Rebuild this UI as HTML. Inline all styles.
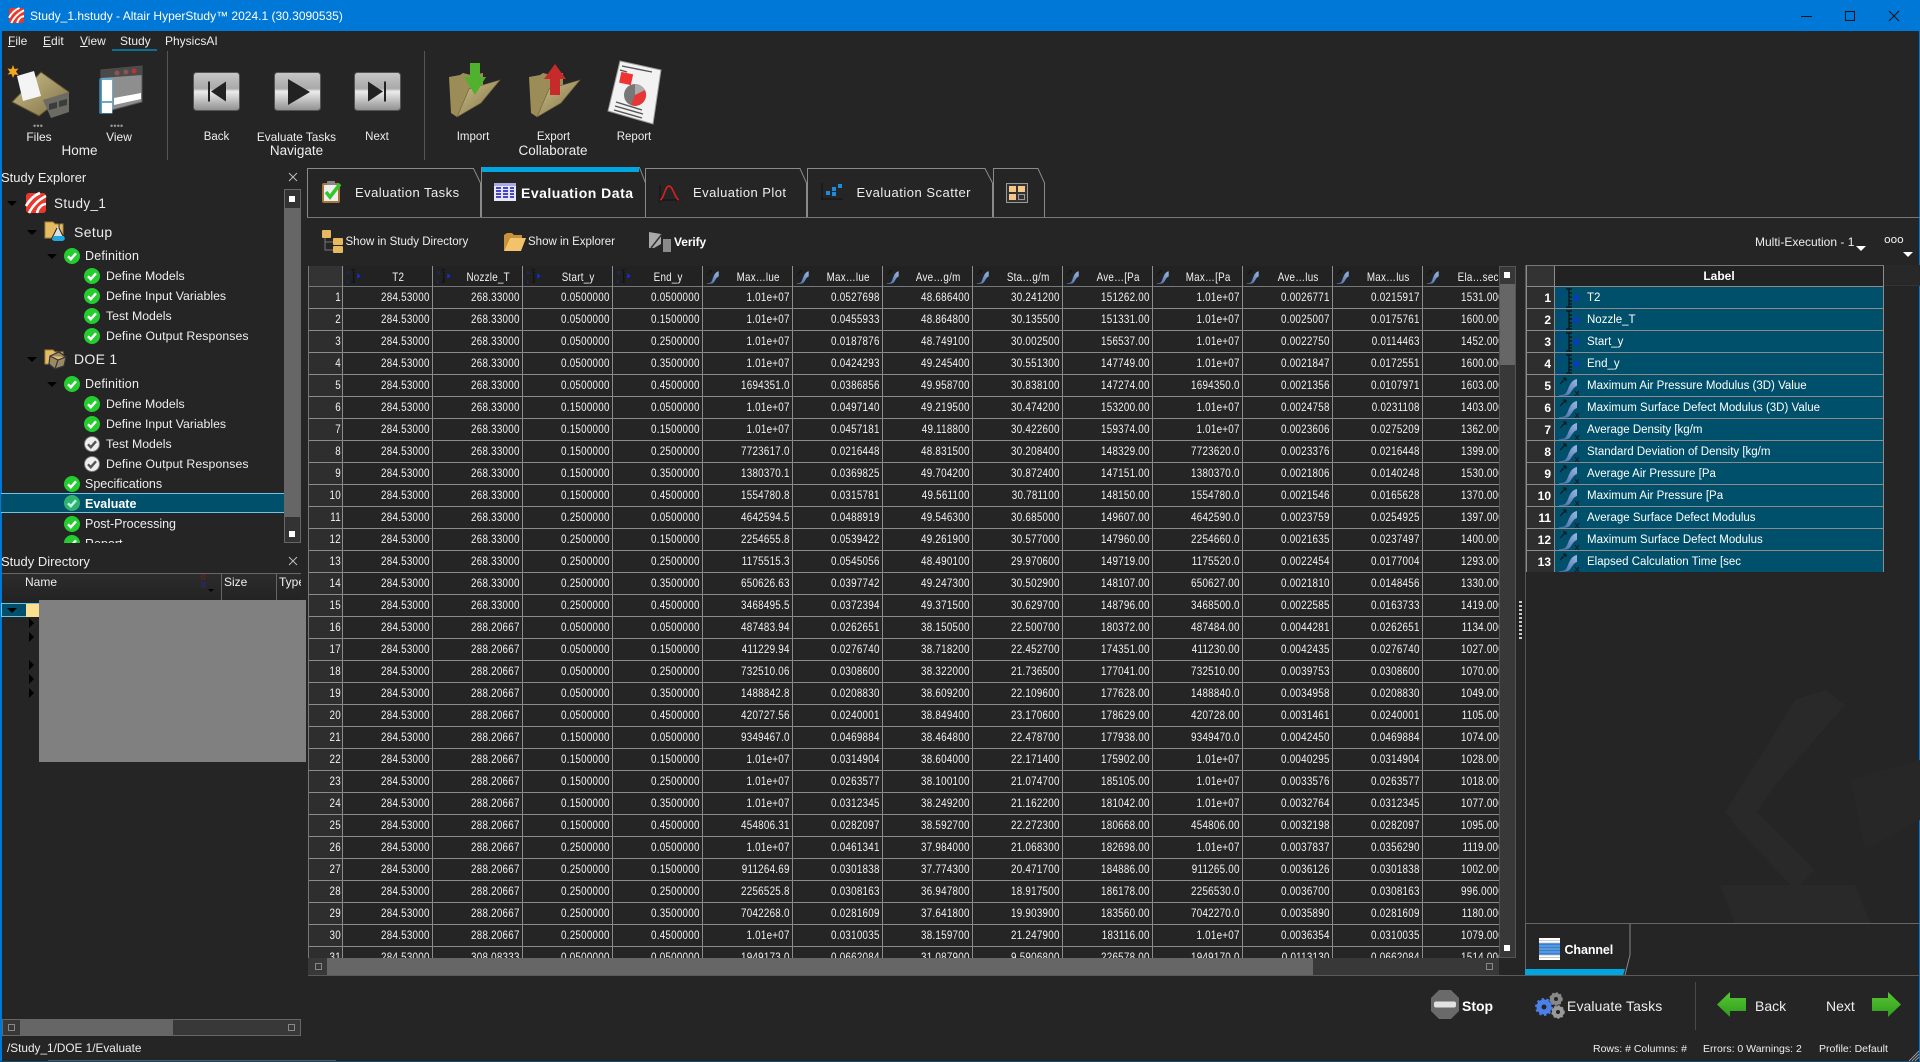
<!DOCTYPE html>
<html lang="en"><head><meta charset="utf-8"><title>Study_1.hstudy - Altair HyperStudy</title>
<style>
*{box-sizing:border-box}
html,body{margin:0;padding:0;width:1920px;height:1062px;overflow:hidden;background:#252525}
body{position:relative;font-family:"Liberation Sans",sans-serif;color:#eee}
.a{position:absolute}
.t{position:absolute;white-space:nowrap;font-size:12px;line-height:14px;color:#eee}
.c{transform:translateX(-50%)}
.tr{position:absolute;width:0;height:0;border-left:5px solid transparent;border-right:5px solid transparent;border-top:5px solid #000}
.rt{position:absolute;width:0;height:0;border-top:5px solid transparent;border-bottom:5px solid transparent;border-left:5px solid #000}
.sq{position:absolute;width:6px;height:6px;background:#fff}
.sqo{position:absolute;width:7px;height:7px;border:1px solid #888}
svg{position:absolute;overflow:visible}
table{border-collapse:separate;border-spacing:0;table-layout:fixed;position:absolute;left:0;top:0}
#g{width:1472px;font:12px/14px "Liberation Sans",sans-serif;letter-spacing:.3px;color:#f2f2f2;transform:scaleX(.81818);transform-origin:0 0}
#g col.h{width:42px}#g col.d{width:110px}
#g td,#g th{height:22px;padding:0 4.500px 2px 0;text-align:right;border-bottom:1px solid #8c8c8c;overflow:hidden;white-space:nowrap;font-weight:normal;background:#252525}
#g thead th{height:21px;text-align:center;padding:2px 0 0 24px;background:#222;position:relative;border-color:#777}
#g tbody th{background:#2e2e2e;padding-right:3px}
#g thead th svg{left:4px;top:3px}
#vl{position:absolute;left:33px;top:0;width:1200px;height:692px;background:repeating-linear-gradient(90deg,#8c8c8c 0 1px,transparent 1px 90px)}
#l{width:357px;font-size:11.500px;color:#fff}
#l col.h{width:28px}
#l td,#l th{height:22px;border-right:1px solid #8c8c8c;border-bottom:1px solid #8c8c8c;padding:0;white-space:nowrap;position:relative}
#l td{background:#00506b;padding-left:32px;line-height:20px}
#l tbody th{background:#2e2e2e;text-align:right;padding-right:3px;font-size:12px}
#l thead th{height:21px;background:#222;font-size:12px}
#l td svg{left:4px;top:1px}
.tab{stroke:#8a8a8a;fill:#252525;stroke-width:1}
</style></head><body>
<svg width="0" height="0" style="position:absolute">
<defs>
<linearGradient id="btn" x1="0" y1="0" x2="0" y2="1"><stop offset="0" stop-color="#c8c8c8"/><stop offset=".42" stop-color="#a9a9a9"/><stop offset=".5" stop-color="#ececec"/><stop offset="1" stop-color="#8f8f8f"/></linearGradient>
<linearGradient id="fold" x1="0" y1="0" x2="1" y2="1"><stop offset="0" stop-color="#cfc08e"/><stop offset="1" stop-color="#7e6f42"/></linearGradient>
<linearGradient id="stair" x1="0" y1="1" x2="1" y2="0"><stop offset="0" stop-color="#41649f"/><stop offset="1" stop-color="#9ab8e4"/></linearGradient>
<linearGradient id="gg" x1="0" y1="0" x2="0" y2="1"><stop offset="0" stop-color="#58c832"/><stop offset="1" stop-color="#2f9a1e"/></linearGradient>
<symbol id="ok" viewBox="0 0 16 16"><circle cx="8" cy="8" r="8" fill="#24cc30"/><path d="M4 8.300l2.800 2.900L12 5.300" fill="none" stroke="#fff" stroke-width="2.400"/></symbol>
<symbol id="okw" viewBox="0 0 16 16"><circle cx="8" cy="8" r="7.500" fill="#eee" stroke="#777"/><path d="M4 8.300l2.800 2.900L12 5.300" fill="none" stroke="#555" stroke-width="2.400"/></symbol>
<symbol id="var" viewBox="0 0 22 20" preserveAspectRatio="none"><text x="0" y="7" font-size="7" fill="#1030d0" font-family="Liberation Sans">U</text><text x="0" y="20" font-size="7" fill="#1030d0" font-family="Liberation Sans">L</text><path d="M7 1h6M10 1v18M7 19h6M10 5h3M10 9h3M10 13h3M10 16h3" stroke="#111" stroke-width="1.200" fill="none"/><path d="M21 10l-5-4v8z" fill="#1030e0"/></symbol>
<symbol id="rsp" viewBox="0 0 22 20" preserveAspectRatio="none"><path d="M0 19c6 0 7-1 9-6s4-9 9-10v7c-3 1-4 3-6 6s-3 4-12 4z" fill="url(#stair)"/><path d="M1 8l6-6M7 2H4M7 2v3" stroke="#111" stroke-width="1" fill="none"/><path d="M16 15l4 5M20 15l-4 5" stroke="#123" stroke-width="1.200"/></symbol>
</defs></svg>

<!-- title bar -->
<div class="a" style="left:0;top:0;width:1920px;height:31px;background:#0078d7"></div>
<div class="a" style="left:0;top:0;width:1.500px;height:1062px;background:#0078d7"></div>
<div class="a" style="left:1919px;top:0;width:1px;height:1062px;background:#0078d7"></div>
<div class="a" style="left:0;top:1061px;width:1920px;height:1px;background:#134b6e"></div>
<div class="a" style="left:48px;top:1060px;width:288px;height:1px;background:#555"></div>
<svg style="left:9px;top:8px" width="15" height="15" viewBox="0 0 20 20"><rect width="20" height="20" rx="3" fill="#e8392c"/><path d="M0 13C4 6 9 2 14 0M3 20C7 12 12 7 20 3M11 20c1-5 5-9 9-9" stroke="#fff" stroke-width="2.600" fill="none"/></svg>
<div class="t" style="left:30px;top:9px;color:#fff;font-size:12px">Study_1.hstudy - Altair HyperStudy™ 2024.1 (30.3090535)</div>
<svg style="left:1800px;top:10px" width="110" height="12" fill="none" stroke="#111"><path d="M1 6.500h11"/><rect x="45.500" y="1.500" width="9" height="9"/><path d="M89 1l10 10M99 1l-10 10"/></svg>

<!-- menu -->
<div class="t" style="left:8px;top:34px"><u>F</u>ile</div>
<div class="t" style="left:43px;top:34px"><u>E</u>dit</div>
<div class="t" style="left:80px;top:34px"><u>V</u>iew</div>
<div class="t" style="left:120px;top:34px">Study</div>
<div class="t" style="left:165px;top:34px">PhysicsAI</div>
<div class="a" style="left:112px;top:49px;width:45px;height:2px;background:#0a6f92"></div>
<div class="a" style="left:167px;top:51px;width:1px;height:109px;background:#555"></div>
<div class="a" style="left:424px;top:51px;width:1px;height:109px;background:#555"></div>

<!-- ribbon icons -->
<svg style="left:7px;top:64px" width="64" height="54" viewBox="0 0 64 54">
<path d="M5 38L34 8l28 20-30 24z" fill="url(#fold)" stroke="#5b4f2c"/>
<path d="M36 36l26-8v20l-18 6z" fill="#6c6b63"/><path d="M42 40l8-2v6l-8 2zM52 37l8-2v6l-8 2z" fill="#3c3c3a"/>
<path d="M10 12l17-5 7 25-18 5z" fill="#f4f4f4"/>
<path d="M6 1l1.500 4 4-.5-2.500 3 2.500 3.500-4-.5L6 14l-1.500-4-4 .5L3 8 .5 4.500l4 .5z" fill="#f3a71c"/></svg>
<svg style="left:96px;top:64px" width="48" height="54" viewBox="0 0 48 54">
<path d="M5 6l41-4v36L5 49z" fill="#8e8e8e" stroke="#555"/><path d="M5 6l41-4v9L5 14z" fill="#4a4a4a"/>
<circle cx="21" cy="9" r="2.500" fill="#8a5555"/><circle cx="30" cy="8" r="2.500" fill="#8a5555"/><circle cx="38" cy="7" r="2.500" fill="#b33"/>
<rect x="3" y="14" width="14" height="36" rx="2" fill="#49c6ff" opacity=".5"/><rect x="6" y="16" width="10" height="21" fill="#fff"/><rect x="6" y="39" width="10" height="10" fill="#fff"/><path d="M18 34l27-5v6l-27 6z" fill="#fff"/></svg>
<svg style="left:193px;top:72px" width="47" height="39"><rect x=".5" y=".5" width="46" height="38" rx="3" fill="url(#btn)" stroke="#555"/><path d="M15 9.500h2v20h-2zM33 9.500v20L18 19.500z" fill="#222"/></svg>
<svg style="left:274px;top:72px" width="47" height="39"><rect x=".5" y=".5" width="46" height="38" rx="3" fill="url(#btn)" stroke="#555"/><path d="M14 7v26l22-13z" fill="#222"/></svg>
<svg style="left:354px;top:72px" width="47" height="39"><rect x=".5" y=".5" width="46" height="38" rx="3" fill="url(#btn)" stroke="#555"/><path d="M30 9.500h2v20h-2zM14 9.500v20l15-10z" fill="#222"/></svg>
<svg style="left:449px;top:63px" width="52" height="56" viewBox="0 0 52 56"><path d="M0 14l11-2 3-2 8 2 12-2v18L8 54 2 50z" fill="#9c8c58"/><path d="M8 54l12-28 31-9-19 23z" fill="url(#fold)" stroke="#6c5e35" stroke-width=".6"/><path d="M21 0h10v14h6L26 32 15 14h6z" fill="#4fb12e"/></svg>
<svg style="left:529px;top:63px" width="52" height="56" viewBox="0 0 52 56"><path d="M0 14l11-2 3-2 8 2 12-2v18L8 54 2 50z" fill="#9c8c58"/><path d="M8 54l12-28 31-9-19 23z" fill="url(#fold)" stroke="#6c5e35" stroke-width=".6"/><path d="M21 32h10V16h6L26 1 15 16h6z" fill="#c62a2a"/></svg>
<svg style="left:608px;top:61px" width="54" height="63" viewBox="0 0 54 63"><path d="M12 0l41 9-8 54L0 50z" fill="#f2f2f2" stroke="#999"/><path d="M14 5l30 6M12 9l7 2M8 41l26 8M7 45l28 8M6 49l28 8" stroke="#555" stroke-width="1.400"/><rect x="12" y="12" width="12" height="11" fill="#e33" transform="rotate(12 18 18)"/><circle cx="27" cy="34" r="11" fill="#777"/><path d="M27 34l10-5a11 11 0 0 1-14 15z" fill="#e83535"/><path d="M27 34V23a11 11 0 0 1 10 6z" fill="#aaa"/></svg>
<div class="t" style="left:33px;top:119px;font-size:9px;color:#999;letter-spacing:.2px">•••</div>
<div class="t" style="left:110px;top:119px;font-size:9px;color:#999;letter-spacing:.2px">••••</div>
<div class="t c" style="left:39px;top:130px">Files</div>
<div class="t c" style="left:119px;top:130px">View</div>
<div class="t c" style="left:216.500px;top:130px;font-size:11.500px">Back</div>
<div class="t c" style="left:296.500px;top:130px;font-size:11.800px">Evaluate Tasks</div>
<div class="t c" style="left:377px;top:130px;font-size:11.500px">Next</div>
<div class="t c" style="left:473px;top:130px;font-size:11.500px">Import</div>
<div class="t c" style="left:553.500px;top:130px;font-size:11.500px">Export</div>
<div class="t c" style="left:634px;top:130px;font-size:11.500px">Report</div>
<div class="t c" style="left:79.500px;top:144px;font-size:13.500px">Home</div>
<div class="t c" style="left:296.500px;top:144px;font-size:13.500px">Navigate</div>
<div class="t c" style="left:553px;top:144px;font-size:13.500px">Collaborate</div>

<!-- study explorer -->
<div class="t" style="left:1px;top:171px;font-size:13px">Study Explorer</div>
<svg style="left:289px;top:173px" width="9" height="9" stroke="#bbb" fill="none"><path d="M0 0l8 8M8 0L0 8"/></svg>
<div class="tr" style="left:7px;top:201px"></div>
<svg style="left:26px;top:193px" width="20" height="20" viewBox="0 0 20 20"><rect width="20" height="20" rx="3" fill="#e8392c"/><path d="M0 13C4 6 9 2 14 0M3 20C7 12 12 7 20 3M11 20c1-5 5-9 9-9" stroke="#fff" stroke-width="2.600" fill="none"/></svg>
<div class="t" style="left:54px;top:197px;font-size:13.500px;letter-spacing:.4px">Study_1</div>
<div class="tr" style="left:27px;top:230px"></div>
<svg style="left:45px;top:220px" width="22" height="22" viewBox="0 0 22 22"><path d="M0 2h8l2 2h8v14H0z" fill="#e6bb62" stroke="#a8843d"/><path d="M11 2h6M14 2v6l5 10a2 2 0 0 1-2 3h-8a2 2 0 0 1-2-3l5-10" fill="#ddd" stroke="#222"/><path d="M9 16h10l1 3-2 2h-9l-2-2z" fill="#20a8e0"/></svg>
<div class="t" style="left:74px;top:225px;font-size:14px;letter-spacing:.4px">Setup</div>
<div class="tr" style="left:47px;top:254px"></div>
<svg style="left:64px;top:248px" width="16" height="16"><use href="#ok"/></svg><div class="t" style="left:85px;top:249px;font-size:12.500px;letter-spacing:.2px">Definition</div>
<svg style="left:84px;top:268px" width="16" height="16"><use href="#ok"/></svg><div class="t" style="left:106px;top:269px;font-size:12.300px">Define Models</div>
<svg style="left:84px;top:288px" width="16" height="16"><use href="#ok"/></svg><div class="t" style="left:106px;top:289px;font-size:12.300px">Define Input Variables</div>
<svg style="left:84px;top:308px" width="16" height="16"><use href="#ok"/></svg><div class="t" style="left:106px;top:309px;font-size:12.300px">Test Models</div>
<svg style="left:84px;top:328px" width="16" height="16"><use href="#ok"/></svg><div class="t" style="left:106px;top:329px;font-size:12.300px;letter-spacing:.08px">Define Output Responses</div>
<div class="tr" style="left:27px;top:357px"></div>
<svg style="left:45px;top:348px" width="22" height="22" viewBox="0 0 22 22"><path d="M0 2h8l2 2h8v12H0z" fill="#e6bb62" stroke="#a8843d"/><path d="M5 8l9-4 7 5-2 9-9 3-6-5zM5 8l8 4 8-3M13 12l-3 9" fill="#9a8a60" stroke="#334" stroke-width="1.200"/></svg>
<div class="t" style="left:74px;top:352px;font-size:14px;letter-spacing:.3px">DOE 1</div>
<div class="tr" style="left:47px;top:382px"></div>
<svg style="left:64px;top:376px" width="16" height="16"><use href="#ok"/></svg><div class="t" style="left:85px;top:377px;font-size:12.500px;letter-spacing:.2px">Definition</div>
<svg style="left:84px;top:396px" width="16" height="16"><use href="#ok"/></svg><div class="t" style="left:106px;top:397px;font-size:12.300px">Define Models</div>
<svg style="left:84px;top:416px" width="16" height="16"><use href="#ok"/></svg><div class="t" style="left:106px;top:417px;font-size:12.300px">Define Input Variables</div>
<svg style="left:84px;top:436px" width="16" height="16"><use href="#okw"/></svg><div class="t" style="left:106px;top:437px;font-size:12.300px">Test Models</div>
<svg style="left:84px;top:456px" width="16" height="16"><use href="#okw"/></svg><div class="t" style="left:106px;top:457px;font-size:12.300px;letter-spacing:.08px">Define Output Responses</div>
<svg style="left:64px;top:476px" width="16" height="16"><use href="#ok"/></svg><div class="t" style="left:85px;top:477px;font-size:12.500px">Specifications</div>
<div class="a" style="left:1px;top:493px;width:283px;height:20px;background:#00506b;border-top:1px solid #6cc4ea;border-bottom:1px solid #6cc4ea"></div>
<svg style="left:64px;top:495px" width="16" height="16" viewBox="0 0 16 16"><circle cx="8" cy="8" r="8" fill="#2fb36c"/><path d="M4 8.300l2.800 2.900L12 5.300" fill="none" stroke="#bfe" stroke-width="2.400"/></svg>
<div class="t" style="left:85px;top:497px;font-size:12.500px;font-weight:bold;color:#fff">Evaluate</div>
<svg style="left:64px;top:516px" width="16" height="16"><use href="#ok"/></svg><div class="t" style="left:85px;top:517px;font-size:12.500px">Post-Processing</div>
<div class="a" style="left:60px;top:535px;width:224px;height:8px;overflow:hidden"><svg style="left:4px;top:0" width="16" height="16"><use href="#ok"/></svg><div class="t" style="left:25px;top:2px;font-size:12.500px">Report</div></div>
<div class="a" style="left:284px;top:189px;width:17px;height:354px;background:#666;border:1px solid #666"></div>
<div class="a" style="left:285px;top:190px;width:15px;height:18px;background:#333"></div>
<div class="a" style="left:285px;top:517px;width:15px;height:25px;background:#333"></div>
<div class="sq" style="left:289px;top:196px"></div>
<div class="sq" style="left:289px;top:531px"></div>

<!-- study directory -->
<div class="t" style="left:1px;top:555px;font-size:13px">Study Directory</div>
<svg style="left:289px;top:557px" width="9" height="9" stroke="#bbb" fill="none"><path d="M0 0l8 8M8 0L0 8"/></svg>
<div class="a" style="left:2px;top:573px;width:299px;height:27px;border-top:1px solid #666;background:linear-gradient(#2c2c2c,#232323)"></div>
<div class="a" style="left:221px;top:574px;width:1px;height:26px;background:#666"></div>
<div class="a" style="left:276px;top:574px;width:1px;height:26px;background:#666"></div>
<div class="t" style="left:25px;top:575px">Name</div>
<div class="t" style="left:201px;top:574px;font-size:8px;line-height:8px;color:#8b1a1a">0</div>
<div class="t" style="left:201px;top:582px;font-size:8px;line-height:8px;color:#22289a">9</div>
<div class="tr" style="left:208px;top:589px;border-width:3px 3px 0"></div>
<div class="t" style="left:224px;top:575px">Size</div>
<div class="a" style="left:278px;top:574px;width:23px;height:26px;overflow:hidden"><div class="t" style="left:1px;top:1px">Type</div></div>
<div class="a" style="left:1px;top:603px;width:38px;height:14px;background:#00506b;border:1px solid #6cc4ea;border-right:0"></div>
<div class="a" style="left:26px;top:604px;width:13px;height:13px;background:#fce08f"></div>
<div class="tr" style="left:7px;top:608px"></div>
<div class="rt" style="left:29px;top:618px"></div><div class="rt" style="left:29px;top:632px"></div><div class="rt" style="left:29px;top:660px"></div><div class="rt" style="left:29px;top:674px"></div><div class="rt" style="left:29px;top:688px"></div>
<div class="a" style="left:39px;top:600px;width:267px;height:162px;background:#808080"></div>
<div class="a" style="left:2px;top:1019px;width:299px;height:17px;background:#383838;border:1px solid #666"></div>
<div class="a" style="left:20px;top:1020px;width:153px;height:15px;background:#666"></div>
<div class="sqo" style="left:8px;top:1024px"></div>
<div class="sqo" style="left:288px;top:1024px"></div>
<div class="t" style="left:7px;top:1041px;font-size:11.800px">/Study_1/DOE 1/Evaluate</div>

<!-- tabs -->
<svg style="left:0;top:0" width="1920" height="220">
<path class="tab" d="M307.500 217.500V168.500H473.500L480.500 183V217.500"/>
<path class="tab" d="M645.500 217.500V183L639.500 167.500H481.500V217.500"/>
<path class="tab" d="M645.500 217.500V168.500H800L806.500 183V217.500"/>
<path class="tab" d="M807.500 217.500V168.500H985L992.500 183V217.500"/>
<path class="tab" d="M993.500 217.500V168.500H1038L1044.500 183V217.500"/>
<path d="M307 217.500H1920" stroke="#777" fill="none"/>
<rect x="482" y="167" width="157" height="5" fill="#00a6e0"/>
</svg>
<svg style="left:321px;top:181px" width="22" height="23" viewBox="0 0 22 23"><rect x="1" y="2" width="18" height="20" rx="2" fill="#a9753c"/><rect x="3" y="4" width="14" height="16" fill="#eee"/><rect x="6" y="0" width="8" height="4" rx="1" fill="#888"/><path d="M5 11l4 5 10-13" fill="none" stroke="#33c62b" stroke-width="3.500"/></svg>
<svg style="left:494px;top:183px" width="22" height="18" viewBox="0 0 22 18"><rect width="22" height="18" fill="#e6e6f6"/><rect y="0" width="22" height="3" fill="#aaaadd"/><path d="M2 5h5M9 5h5M16 5h4M2 8h5M9 8h5M16 8h4M2 11h5M9 11h5M16 11h4M2 14h5M9 14h5M16 14h4" stroke="#4646c8" stroke-width="2"/></svg>
<svg style="left:659px;top:185px" width="22" height="18" viewBox="0 0 22 18" fill="none"><path d="M1 0v18M0 15h22" stroke="#111"/><path d="M1 15C5 14 6 1 10 1s6 13 10 14" stroke="#e02020" stroke-width="1.500"/></svg>
<svg style="left:821px;top:183px" width="22" height="18" viewBox="0 0 22 18"><path d="M1 0v17M0 16h22" stroke="#111" fill="none"/><rect x="17" y="1" width="4" height="4" fill="#1c8be0"/><rect x="11" y="4" width="4" height="4" fill="#1c8be0"/><rect x="5" y="8" width="4" height="4" fill="#1c8be0"/><rect x="11" y="9" width="4" height="4" fill="#1c8be0"/></svg>
<svg style="left:1006px;top:183px" width="22" height="20" viewBox="0 0 22 20"><rect x=".5" y=".5" width="21" height="19" fill="#333" stroke="#999"/><rect x="3" y="3" width="7" height="6" fill="#f5c88a"/><rect x="12" y="3" width="7" height="6" fill="#f5c88a"/><rect x="3" y="11" width="7" height="6" fill="#f5c88a"/><rect x="12.500" y="11.500" width="6" height="5" fill="none" stroke="#999"/></svg>
<div class="t" style="left:355px;top:186px;font-size:13px;letter-spacing:.45px">Evaluation Tasks</div>
<div class="t" style="left:521px;top:186px;font-size:14px;font-weight:bold;letter-spacing:.5px;color:#fff">Evaluation Data</div>
<div class="t" style="left:693px;top:186px;font-size:13px;letter-spacing:.45px">Evaluation Plot</div>
<div class="t" style="left:856.500px;top:186px;font-size:13px;letter-spacing:.5px">Evaluation Scatter</div>

<!-- toolbar -->
<svg style="left:322px;top:230px" width="22" height="23" viewBox="0 0 22 23"><path d="M3 8v12h8M3 12h8" stroke="#777" fill="none"/><rect x="0" y="0" width="9" height="8" rx="1" fill="#e8b85e"/><rect x="11" y="8" width="10" height="7" rx="1" fill="#e8b85e"/><rect x="11" y="16" width="10" height="7" rx="1" fill="#e8b85e"/></svg>
<svg style="left:504px;top:232px" width="22" height="20" viewBox="0 0 22 20"><path d="M0 19V3l3-2h5l2 2h8v3H6z" fill="#c8923a"/><path d="M0 19l6-13h16l-5 13z" fill="#f2c36a"/></svg>
<svg style="left:649px;top:230px" width="22" height="22" viewBox="0 0 22 22"><path d="M0 2l12 2v10L5 18H0z" fill="#aaa"/><rect x="14" y="9" width="8" height="13" fill="#8a8a8a"/><path d="M2 18L13 4" stroke="#333" stroke-width="1.500"/></svg>
<div class="t" style="left:345.500px;top:235px;font-size:11.500px">Show in Study Directory</div>
<div class="t" style="left:528px;top:235px;font-size:11.500px">Show in Explorer</div>
<div class="t" style="left:674px;top:235px;font-weight:bold;color:#fff;letter-spacing:-.1px;font-size:12px">Verify</div>
<div class="t" style="left:1755px;top:235px">Multi-Execution - 1</div>
<svg style="left:1856px;top:246px" width="10" height="5"><path d="M0 0h10L5 5z" fill="#fff"/></svg>
<div class="t" style="left:1884px;top:233px;font-size:11px;letter-spacing:-.2px;font-family:'DejaVu Sans',sans-serif">ooo</div>
<svg style="left:1903px;top:252px" width="10" height="5"><path d="M0 0h10L5 5z" fill="#fff"/></svg>

<!-- main grid -->
<div class="a" style="left:308px;top:266px;width:1191px;height:692px;overflow:hidden;border-left:1px solid #777">
<table id="g"><colgroup><col class="h"><col class="d"><col class="d"><col class="d"><col class="d"><col class="d"><col class="d"><col class="d"><col class="d"><col class="d"><col class="d"><col class="d"><col class="d"><col class="d"></colgroup>
<thead><tr><th style="background:#333;padding:0"></th>
<th><svg width="18" height="14"><use href="#var"/></svg>T2</th><th><svg width="18" height="14"><use href="#var"/></svg>Nozzle_T</th><th><svg width="18" height="14"><use href="#var"/></svg>Start_y</th><th><svg width="18" height="14"><use href="#var"/></svg>End_y</th>
<th><svg width="18" height="15"><use href="#rsp"/></svg>Max…lue</th><th><svg width="18" height="15"><use href="#rsp"/></svg>Max…lue</th><th><svg width="18" height="15"><use href="#rsp"/></svg>Ave…g/m</th><th><svg width="18" height="15"><use href="#rsp"/></svg>Sta…g/m</th><th><svg width="18" height="15"><use href="#rsp"/></svg>Ave…[Pa</th><th><svg width="18" height="15"><use href="#rsp"/></svg>Max…[Pa</th><th><svg width="18" height="15"><use href="#rsp"/></svg>Ave…lus</th><th><svg width="18" height="15"><use href="#rsp"/></svg>Max…lus</th><th><svg width="18" height="15"><use href="#rsp"/></svg>Ela…sec</th></tr></thead>
<tbody>
<tr><th>1</th><td>284.53000</td><td>268.33000</td><td>0.0500000</td><td>0.0500000</td><td>1.01e+07</td><td>0.0527698</td><td>48.686400</td><td>30.241200</td><td>151262.00</td><td>1.01e+07</td><td>0.0026771</td><td>0.0215917</td><td>1531.0000</td></tr>
<tr><th>2</th><td>284.53000</td><td>268.33000</td><td>0.0500000</td><td>0.1500000</td><td>1.01e+07</td><td>0.0455933</td><td>48.864800</td><td>30.135500</td><td>151331.00</td><td>1.01e+07</td><td>0.0025007</td><td>0.0175761</td><td>1600.0000</td></tr>
<tr><th>3</th><td>284.53000</td><td>268.33000</td><td>0.0500000</td><td>0.2500000</td><td>1.01e+07</td><td>0.0187876</td><td>48.749100</td><td>30.002500</td><td>156537.00</td><td>1.01e+07</td><td>0.0022750</td><td>0.0114463</td><td>1452.0000</td></tr>
<tr><th>4</th><td>284.53000</td><td>268.33000</td><td>0.0500000</td><td>0.3500000</td><td>1.01e+07</td><td>0.0424293</td><td>49.245400</td><td>30.551300</td><td>147749.00</td><td>1.01e+07</td><td>0.0021847</td><td>0.0172551</td><td>1600.0000</td></tr>
<tr><th>5</th><td>284.53000</td><td>268.33000</td><td>0.0500000</td><td>0.4500000</td><td>1694351.0</td><td>0.0386856</td><td>49.958700</td><td>30.838100</td><td>147274.00</td><td>1694350.0</td><td>0.0021356</td><td>0.0107971</td><td>1603.0000</td></tr>
<tr><th>6</th><td>284.53000</td><td>268.33000</td><td>0.1500000</td><td>0.0500000</td><td>1.01e+07</td><td>0.0497140</td><td>49.219500</td><td>30.474200</td><td>153200.00</td><td>1.01e+07</td><td>0.0024758</td><td>0.0231108</td><td>1403.0000</td></tr>
<tr><th>7</th><td>284.53000</td><td>268.33000</td><td>0.1500000</td><td>0.1500000</td><td>1.01e+07</td><td>0.0457181</td><td>49.118800</td><td>30.422600</td><td>159374.00</td><td>1.01e+07</td><td>0.0023606</td><td>0.0275209</td><td>1362.0000</td></tr>
<tr><th>8</th><td>284.53000</td><td>268.33000</td><td>0.1500000</td><td>0.2500000</td><td>7723617.0</td><td>0.0216448</td><td>48.831500</td><td>30.208400</td><td>148329.00</td><td>7723620.0</td><td>0.0023376</td><td>0.0216448</td><td>1399.0000</td></tr>
<tr><th>9</th><td>284.53000</td><td>268.33000</td><td>0.1500000</td><td>0.3500000</td><td>1380370.1</td><td>0.0369825</td><td>49.704200</td><td>30.872400</td><td>147151.00</td><td>1380370.0</td><td>0.0021806</td><td>0.0140248</td><td>1530.0000</td></tr>
<tr><th>10</th><td>284.53000</td><td>268.33000</td><td>0.1500000</td><td>0.4500000</td><td>1554780.8</td><td>0.0315781</td><td>49.561100</td><td>30.781100</td><td>148150.00</td><td>1554780.0</td><td>0.0021546</td><td>0.0165628</td><td>1370.0000</td></tr>
<tr><th>11</th><td>284.53000</td><td>268.33000</td><td>0.2500000</td><td>0.0500000</td><td>4642594.5</td><td>0.0488919</td><td>49.546300</td><td>30.685000</td><td>149607.00</td><td>4642590.0</td><td>0.0023759</td><td>0.0254925</td><td>1397.0000</td></tr>
<tr><th>12</th><td>284.53000</td><td>268.33000</td><td>0.2500000</td><td>0.1500000</td><td>2254655.8</td><td>0.0539422</td><td>49.261900</td><td>30.577000</td><td>147960.00</td><td>2254660.0</td><td>0.0021635</td><td>0.0237497</td><td>1400.0000</td></tr>
<tr><th>13</th><td>284.53000</td><td>268.33000</td><td>0.2500000</td><td>0.2500000</td><td>1175515.3</td><td>0.0545056</td><td>48.490100</td><td>29.970600</td><td>149719.00</td><td>1175520.0</td><td>0.0022454</td><td>0.0177004</td><td>1293.0000</td></tr>
<tr><th>14</th><td>284.53000</td><td>268.33000</td><td>0.2500000</td><td>0.3500000</td><td>650626.63</td><td>0.0397742</td><td>49.247300</td><td>30.502900</td><td>148107.00</td><td>650627.00</td><td>0.0021810</td><td>0.0148456</td><td>1330.0000</td></tr>
<tr><th>15</th><td>284.53000</td><td>268.33000</td><td>0.2500000</td><td>0.4500000</td><td>3468495.5</td><td>0.0372394</td><td>49.371500</td><td>30.629700</td><td>148796.00</td><td>3468500.0</td><td>0.0022585</td><td>0.0163733</td><td>1419.0000</td></tr>
<tr><th>16</th><td>284.53000</td><td>288.20667</td><td>0.0500000</td><td>0.0500000</td><td>487483.94</td><td>0.0262651</td><td>38.150500</td><td>22.500700</td><td>180372.00</td><td>487484.00</td><td>0.0044281</td><td>0.0262651</td><td>1134.0000</td></tr>
<tr><th>17</th><td>284.53000</td><td>288.20667</td><td>0.0500000</td><td>0.1500000</td><td>411229.94</td><td>0.0276740</td><td>38.718200</td><td>22.452700</td><td>174351.00</td><td>411230.00</td><td>0.0042435</td><td>0.0276740</td><td>1027.0000</td></tr>
<tr><th>18</th><td>284.53000</td><td>288.20667</td><td>0.0500000</td><td>0.2500000</td><td>732510.06</td><td>0.0308600</td><td>38.322000</td><td>21.736500</td><td>177041.00</td><td>732510.00</td><td>0.0039753</td><td>0.0308600</td><td>1070.0000</td></tr>
<tr><th>19</th><td>284.53000</td><td>288.20667</td><td>0.0500000</td><td>0.3500000</td><td>1488842.8</td><td>0.0208830</td><td>38.609200</td><td>22.109600</td><td>177628.00</td><td>1488840.0</td><td>0.0034958</td><td>0.0208830</td><td>1049.0000</td></tr>
<tr><th>20</th><td>284.53000</td><td>288.20667</td><td>0.0500000</td><td>0.4500000</td><td>420727.56</td><td>0.0240001</td><td>38.849400</td><td>23.170600</td><td>178629.00</td><td>420728.00</td><td>0.0031461</td><td>0.0240001</td><td>1105.0000</td></tr>
<tr><th>21</th><td>284.53000</td><td>288.20667</td><td>0.1500000</td><td>0.0500000</td><td>9349467.0</td><td>0.0469884</td><td>38.464800</td><td>22.478700</td><td>177938.00</td><td>9349470.0</td><td>0.0042450</td><td>0.0469884</td><td>1074.0000</td></tr>
<tr><th>22</th><td>284.53000</td><td>288.20667</td><td>0.1500000</td><td>0.1500000</td><td>1.01e+07</td><td>0.0314904</td><td>38.604000</td><td>22.171400</td><td>175902.00</td><td>1.01e+07</td><td>0.0040295</td><td>0.0314904</td><td>1028.0000</td></tr>
<tr><th>23</th><td>284.53000</td><td>288.20667</td><td>0.1500000</td><td>0.2500000</td><td>1.01e+07</td><td>0.0263577</td><td>38.100100</td><td>21.074700</td><td>185105.00</td><td>1.01e+07</td><td>0.0033576</td><td>0.0263577</td><td>1018.0000</td></tr>
<tr><th>24</th><td>284.53000</td><td>288.20667</td><td>0.1500000</td><td>0.3500000</td><td>1.01e+07</td><td>0.0312345</td><td>38.249200</td><td>21.162200</td><td>181042.00</td><td>1.01e+07</td><td>0.0032764</td><td>0.0312345</td><td>1077.0000</td></tr>
<tr><th>25</th><td>284.53000</td><td>288.20667</td><td>0.1500000</td><td>0.4500000</td><td>454806.31</td><td>0.0282097</td><td>38.592700</td><td>22.272300</td><td>180668.00</td><td>454806.00</td><td>0.0032198</td><td>0.0282097</td><td>1095.0000</td></tr>
<tr><th>26</th><td>284.53000</td><td>288.20667</td><td>0.2500000</td><td>0.0500000</td><td>1.01e+07</td><td>0.0461341</td><td>37.984000</td><td>21.068300</td><td>182698.00</td><td>1.01e+07</td><td>0.0037837</td><td>0.0356290</td><td>1119.0000</td></tr>
<tr><th>27</th><td>284.53000</td><td>288.20667</td><td>0.2500000</td><td>0.1500000</td><td>911264.69</td><td>0.0301838</td><td>37.774300</td><td>20.471700</td><td>184886.00</td><td>911265.00</td><td>0.0036126</td><td>0.0301838</td><td>1002.0000</td></tr>
<tr><th>28</th><td>284.53000</td><td>288.20667</td><td>0.2500000</td><td>0.2500000</td><td>2256525.8</td><td>0.0308163</td><td>36.947800</td><td>18.917500</td><td>186178.00</td><td>2256530.0</td><td>0.0036700</td><td>0.0308163</td><td>996.00000</td></tr>
<tr><th>29</th><td>284.53000</td><td>288.20667</td><td>0.2500000</td><td>0.3500000</td><td>7042268.0</td><td>0.0281609</td><td>37.641800</td><td>19.903900</td><td>183560.00</td><td>7042270.0</td><td>0.0035890</td><td>0.0281609</td><td>1180.0000</td></tr>
<tr><th>30</th><td>284.53000</td><td>288.20667</td><td>0.2500000</td><td>0.4500000</td><td>1.01e+07</td><td>0.0310035</td><td>38.159700</td><td>21.247900</td><td>183116.00</td><td>1.01e+07</td><td>0.0036354</td><td>0.0310035</td><td>1079.0000</td></tr>
<tr><th>31</th><td>284.53000</td><td>308.08333</td><td>0.0500000</td><td>0.0500000</td><td>1949173.0</td><td>0.0662084</td><td>31.087900</td><td>9.5906800</td><td>226578.00</td><td>1949170.0</td><td>0.0113130</td><td>0.0662084</td><td>1514.0000</td></tr>
</tbody></table><div id="vl"></div></div>

<!-- grid scrollbars -->
<div class="a" style="left:1499px;top:266px;width:17px;height:692px;background:#383838;border:1px solid #555"></div>
<div class="a" style="left:1500px;top:284px;width:15px;height:81px;background:#666"></div>
<div class="sq" style="left:1504px;top:272px"></div>
<div class="sq" style="left:1504px;top:945px"></div>
<div class="a" style="left:308px;top:958px;width:1191px;height:18px;background:#383838;border-bottom:1px solid #555"></div>
<div class="a" style="left:327px;top:958px;width:986px;height:17px;background:#666"></div>
<div class="sqo" style="left:315px;top:963px"></div>
<div class="sqo" style="left:1486px;top:963px"></div>
<svg style="left:1518px;top:600px" width="5" height="40" fill="#ccc"><path d="M1 1h3v2H1zM1 5h3v2H1zM1 9h3v2H1zM1 13h3v2H1zM1 17h3v2H1zM1 21h3v2H1zM1 25h3v2H1zM1 29h3v2H1zM1 33h3v2H1zM1 37h3v2H1z"/></svg>

<!-- right panel -->
<div class="a" style="left:1525px;top:265px;width:1px;height:659px;background:#555"></div>
<div class="a" style="left:1526px;top:265px;width:394px;height:21px;background:#282828;border-bottom:1px solid #333"></div>
<svg style="left:1700px;top:690px" width="220" height="233" viewBox="0 0 220 233"><g fill="#292929"><path d="M95 10l30-10 20 15-70 80-30 45-20-18 35-55z"/><path d="M30 130l25-10 60 60-20 20z"/><path d="M20 195h135l15 38H35z"/><path d="M150 90l70-20v60l-55 30z" fill="#272727"/></g></svg>
<div class="a" style="left:1526px;top:265px;width:358px;height:307px;overflow:hidden;border-left:1px solid #8c8c8c;border-top:1px solid #777">
<table id="l"><colgroup><col class="h"><col></colgroup>
<thead><tr><th style="background:#333"></th><th>Label</th></tr></thead>
<tbody>
<tr><th>1</th><td><svg width="22" height="20"><use href="#var"/></svg>T2</td></tr>
<tr><th>2</th><td><svg width="22" height="20"><use href="#var"/></svg>Nozzle_T</td></tr>
<tr><th>3</th><td><svg width="22" height="20"><use href="#var"/></svg>Start_y</td></tr>
<tr><th>4</th><td><svg width="22" height="20"><use href="#var"/></svg>End_y</td></tr>
<tr><th>5</th><td><svg width="22" height="20"><use href="#rsp"/></svg>Maximum Air Pressure Modulus (3D) Value</td></tr>
<tr><th>6</th><td><svg width="22" height="20"><use href="#rsp"/></svg>Maximum Surface Defect Modulus (3D) Value</td></tr>
<tr><th>7</th><td><svg width="22" height="20"><use href="#rsp"/></svg>Average Density [kg/m</td></tr>
<tr><th>8</th><td><svg width="22" height="20"><use href="#rsp"/></svg>Standard Deviation of Density [kg/m</td></tr>
<tr><th>9</th><td><svg width="22" height="20"><use href="#rsp"/></svg>Average Air Pressure [Pa</td></tr>
<tr><th>10</th><td><svg width="22" height="20"><use href="#rsp"/></svg>Maximum Air Pressure [Pa</td></tr>
<tr><th>11</th><td><svg width="22" height="20"><use href="#rsp"/></svg>Average Surface Defect Modulus</td></tr>
<tr><th>12</th><td><svg width="22" height="20"><use href="#rsp"/></svg>Maximum Surface Defect Modulus</td></tr>
<tr><th>13</th><td><svg width="22" height="20"><use href="#rsp"/></svg>Elapsed Calculation Time [sec</td></tr>
</tbody></table></div>

<!-- channel tab -->
<div class="a" style="left:1525px;top:923px;width:395px;height:1px;background:#666"></div>
<div class="a" style="left:1525px;top:924px;width:1px;height:52px;background:#666"></div>
<svg style="left:1525px;top:924px" width="106" height="52"><path d="M105 0V31L100 51" stroke="#888" fill="none"/><path d="M0 45H100L98 52H0z" fill="#00a6e0"/></svg>
<svg style="left:1539px;top:938px" width="21" height="22" viewBox="0 0 21 22"><rect width="21" height="22" fill="#fff"/><rect y="5" width="21" height="12" fill="#2b82e0"/><path d="M0 2.500h21M0 5h21M0 8h21M0 11h21M0 14h21M0 17h21M0 19.500h21" stroke="#bbb" stroke-width=".8"/></svg>
<div class="t" style="left:1564.500px;top:943px;font-size:12.500px;font-weight:bold;letter-spacing:-.1px;color:#fff">Channel</div>

<!-- bottom bar -->
<div class="a" style="left:308px;top:975px;width:1612px;height:1px;background:#5a5a5a"></div>
<div class="a" style="left:1695px;top:982px;width:1px;height:48px;background:#4a4a4a"></div>
<svg style="left:1431px;top:990px" width="28" height="29" viewBox="0 0 28 29"><path d="M8 0h12l8 8v13l-8 8H8l-8-8V8z" fill="#6a6a6a"/><rect x="3" y="11.500" width="22" height="6" rx="2" fill="#e2e2e2"/></svg>
<div class="t" style="left:1462px;top:999px;font-size:14px;font-weight:bold;color:#fff">Stop</div>
<svg style="left:1534px;top:992px" width="30" height="30" viewBox="0 0 30 30" fill="none"><circle cx="22" cy="7" r="4" stroke="#888" stroke-width="4"/><circle cx="10" cy="15" r="5" stroke="#4a80e8" stroke-width="5"/><circle cx="24" cy="20" r="4" stroke="#999" stroke-width="4"/><circle cx="22" cy="7" r="6" stroke="#888" stroke-width="1.500" stroke-dasharray="2 2"/><circle cx="10" cy="15" r="8" stroke="#4a80e8" stroke-width="1.800" stroke-dasharray="2.500 2.500"/><circle cx="24" cy="20" r="6" stroke="#999" stroke-width="1.500" stroke-dasharray="2 2"/></svg>
<div class="t" style="left:1567px;top:999px;font-size:14px;letter-spacing:.1px">Evaluate Tasks</div>
<svg style="left:1717px;top:992px" width="29" height="25" viewBox="0 0 29 25"><path d="M0 12.500L13 0v6h16v13H13v6z" fill="url(#gg)"/></svg>
<div class="t" style="left:1755px;top:999px;font-size:14px">Back</div>
<div class="t" style="left:1826px;top:999px;font-size:14px">Next</div>
<svg style="left:1872px;top:992px" width="29" height="25" viewBox="0 0 29 25"><path d="M29 12.500L16 0v6H0v13h16v6z" fill="url(#gg)"/></svg>
<div class="t" style="left:1593px;top:1042px;font-size:10.500px">Rows: # Columns: #</div>
<div class="t" style="left:1703px;top:1042px;font-size:10.500px">Errors: 0 Warnings: 2</div>
<div class="t" style="left:1819px;top:1042px;font-size:10.500px">Profile: Default</div>
<svg style="left:1908px;top:1050px" width="11" height="11" stroke="#999" fill="none"><path d="M1 11L11 1M4 11l7-7M7 11l4-4"/></svg>
</body></html>
